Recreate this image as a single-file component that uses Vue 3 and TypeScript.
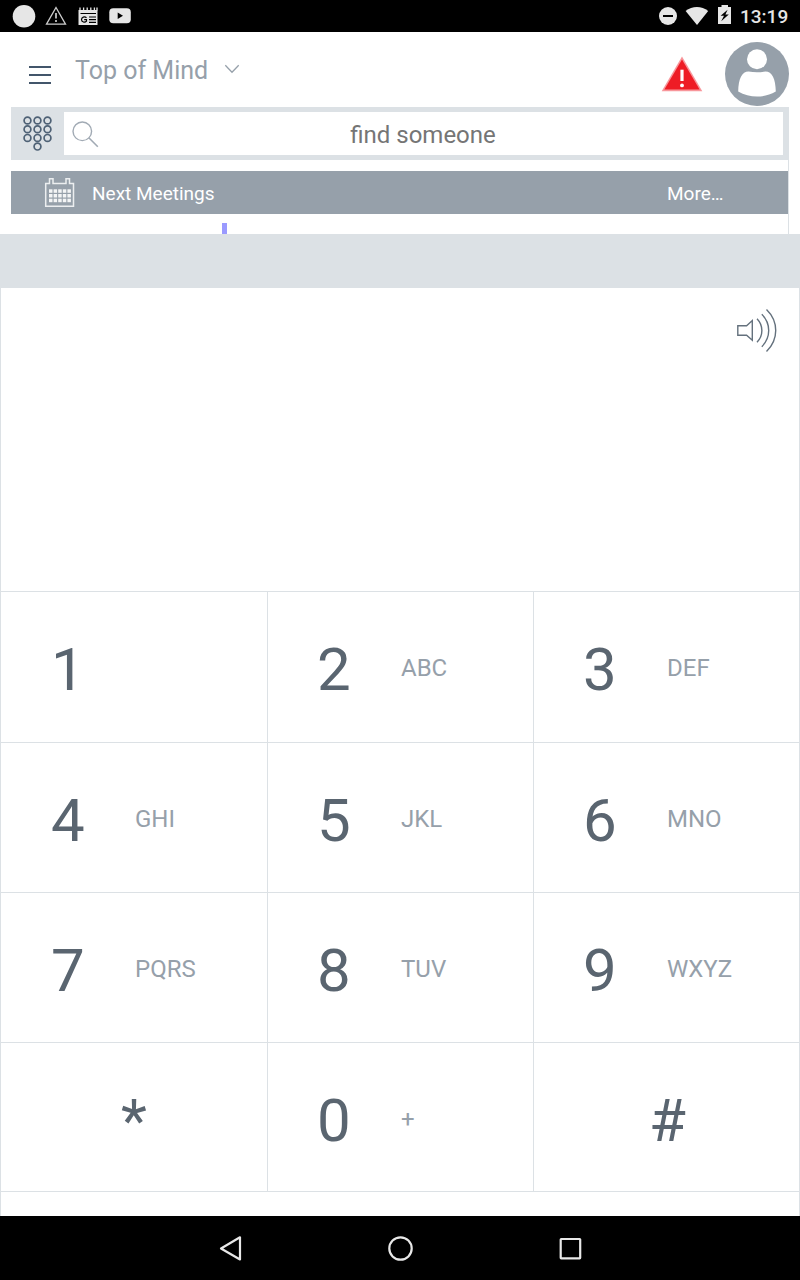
<script setup lang="ts">
interface Key {
  digit: string
  letters?: string
  symbol?: boolean
}

const keys: Key[] = [
  { digit: '1' },
  { digit: '2', letters: 'ABC' },
  { digit: '3', letters: 'DEF' },
  { digit: '4', letters: 'GHI' },
  { digit: '5', letters: 'JKL' },
  { digit: '6', letters: 'MNO' },
  { digit: '7', letters: 'PQRS' },
  { digit: '8', letters: 'TUV' },
  { digit: '9', letters: 'WXYZ' },
  { digit: '*', symbol: true },
  { digit: '0', letters: '+' },
  { digit: '#', symbol: true },
]

// centres of the dial pad icon's rings
const rings: [number, number][] = [
  [27.5, 13.5], [37.5, 13.5], [47.5, 13.5],
  [27.5, 22.2], [37.5, 22.2], [47.5, 22.2],
  [27.5, 30.9], [37.5, 30.9], [47.5, 30.9],
  [37.5, 39.6],
]
const calendarColumns = [49, 53.6, 58.2, 62.8, 67.4]
const calendarRows = [189.3, 194, 198.7]
</script>

<template>
  <div class="screen">
    <div class="status">
      <svg width="140" height="32" viewBox="0 0 140 32">
        <circle cx="24" cy="16.3" r="11.3" fill="#e6e6e6" />
        <path d="M56 7.5L65.5 24.2H46.5Z" fill="none" stroke="#ccc" stroke-width="1.3" />
        <path d="M56 13v5.5M56 20v2" stroke="#ccc" stroke-width="1.7" />
        <path d="M78.5 10h19v15h-19z" fill="#e6e6e6" />
        <path d="M80 7.5v3M83.6 7.5v3M87.2 7.5v3M90.8 7.5v3M94.4 7.5v3M97 7.5v3" stroke="#e6e6e6" stroke-width="1.3" />
        <path d="M80.5 13.5H96M89 17h7M89 19.7h7M89 22.4h7" stroke="#000" stroke-width="1.2" />
        <path d="M86.5 17.7c-2-1.7-5-.6-5 1.9s3.4 3.4 5 1.6v-1.6h-2.3" fill="none" stroke="#000" stroke-width="1.2" />
        <rect x="109.3" y="8.3" width="21.5" height="15" rx="4" fill="#e6e6e6" />
        <path d="M117.7 12.6l5.3 3.2-5.3 3.2z" fill="#000" />
      </svg>
      <svg width="84" height="32" viewBox="655 0 84 32">
        <circle cx="668" cy="16" r="9" fill="#e6e6e6" />
        <path d="M663 16h10" stroke="#000" stroke-width="2" />
        <path d="M685.6 11c6.6-5.3 16-5.3 22.6 0L697 25z" fill="#e6e6e6" />
        <path d="M718 7h3.5V5h6.5v2h3v17h-13z" fill="#e6e6e6" />
        <path d="M727.6 9.8l-7 6h3.4l-2.8 5.4 7.6-6.6h-3.4z" fill="#000" />
      </svg>
      <span class="clock">13:19</span>
    </div>

    <header class="header">
      <svg class="menu" width="24" height="20" viewBox="0 0 24 20">
        <path d="M1 2h22M1 10h22M1 18h22" stroke="#43566b" stroke-width="2" />
      </svg>
      <span class="title">Top of Mind</span>
      <svg class="chevron" width="16" height="10" viewBox="0 0 16 10">
        <path d="M1.3 1.3L8 8.3l6.7-7" fill="none" stroke="#96a0aa" stroke-width="1.3" />
      </svg>
      <svg class="alert" width="42" height="37" viewBox="661 56 42 37">
        <path d="M682 56.5L702.3 91.3H661.7Z" fill="#f8969b" />
        <path d="M682 59.5L699.6 89.5H664.4Z" fill="#ee1c25" />
        <path d="M682 69.7v11.3" stroke="#fff" stroke-width="3.2" />
        <circle cx="682" cy="85.4" r="1.9" fill="#fff" />
      </svg>
      <svg class="avatar" width="64" height="64" viewBox="725 42 64 64">
        <circle cx="757" cy="74" r="32" fill="#96a0aa" />
        <circle cx="757" cy="59.2" r="10" fill="#fff" />
        <path d="M738.2 91.5c.2-13 3.8-20 10.3-20 5.5 1 11.5 1 17 0 6.5 0 10.1 7 10.3 20-11.5 6.7-26.1 6.7-37.6 0z" fill="#fff" />
      </svg>
    </header>

    <div class="search">
      <svg class="dial" width="53" height="53" viewBox="11 0 53 53">
        <circle v-for="([x, y], i) in rings" :key="i" :cx="x" :cy="y" r="3.4" fill="none" stroke="#4f6276" stroke-width="1.7" />
      </svg>
      <div class="field">
        <svg class="lens" width="28" height="28" viewBox="71 119 28 28">
          <circle cx="82.3" cy="130.3" r="9.3" fill="none" stroke="#a1aab4" stroke-width="1.4" />
          <path d="M88.8 136.8l9 9" stroke="#a1aab4" stroke-width="1.6" />
        </svg>
        <span class="hint">find someone</span>
      </div>
    </div>

    <div class="agenda">
      <div class="meetings">
        <svg class="calendar" width="31" height="31" viewBox="44 177 31 31">
          <path d="M45.7 183.5h3.8v-4.7h3.5v4.7h13v-4.7h3.5v4.7h4v22.7H45.7z" fill="none" stroke="#eceef0" stroke-width="1.5" />
          <template v-for="y in calendarRows" :key="y">
            <rect v-for="x in calendarColumns" :key="x" :x="x" :y="y" width="3.5" height="3.5" fill="#f4f5f6" />
          </template>
        </svg>
        <span class="label">Next Meetings</span>
        <span class="more">More…</span>
      </div>
      <div class="tick"></div>
    </div>

    <div class="band"></div>

    <main class="dialer">
      <div class="display">
        <svg width="42" height="46" viewBox="736 307 42 46" fill="none" stroke="#64717d" stroke-width="1.4">
          <path d="M737.8 325.7h8.8l5.7-5.2v19.8l-5.7-5.1h-8.8z" />
          <path d="M757 318.7c6.5 6.7 6.5 16.8 0 23.5M761.8 314.3c9.2 9.3 9.2 23 0 32.4M766.5 309.5c12.3 12 12.3 30 0 42" />
        </svg>
      </div>
      <div class="keypad">
        <div v-for="key in keys" :key="key.digit" class="key" :class="{ symbol: key.symbol }">
          <span class="digit">{{ key.digit }}</span>
          <span v-if="key.letters" class="letters">{{ key.letters }}</span>
        </div>
      </div>
    </main>

    <nav class="nav">
      <svg width="800" height="64" viewBox="0 1216 800 64" fill="none" stroke="#e8e8e8" stroke-width="2.2">
        <path d="M240 1237.3v22.2L221 1248.5z" stroke-linejoin="round" />
        <circle cx="400.5" cy="1248.5" r="11.2" />
        <rect x="560.7" y="1239" width="19.5" height="19.3" rx=".5" />
      </svg>
    </nav>
  </div>
</template>

<style>
body {
  margin: 0;
  background: #fff;
}
</style>

<style scoped>
.screen {
  width: 800px;
  height: 1280px;
  display: flex;
  flex-direction: column;
  background: #fff;
  font-family: Roboto, sans-serif;
  overflow: hidden;
}
svg {
  display: block;
  flex: none;
}
.status {
  height: 32px;
  display: flex;
  background: #000;
  color: #e6e6e6;
}
.status svg + svg {
  margin-left: 515px;
}
.clock {
  margin-left: 1px;
  font-size: 19px;
  font-weight: 500;
  line-height: 33px;
}
.header {
  height: 75px;
  display: flex;
  align-items: flex-start;
}
.menu {
  margin: 33px 0 0 28px;
}
.title {
  width: 140px;
  margin: 24px 0 0 23px;
  font-size: 25px;
  line-height: 30px;
  color: #96a0aa;
  white-space: nowrap;
}
.chevron {
  margin: 32px 0 0 9px;
}
.alert {
  margin: 24px 0 0 421px;
}
.avatar {
  margin: 10px 0 0 22px;
}
.search {
  width: 778px;
  height: 53px;
  margin-left: 11px;
  display: flex;
  background: #dce1e5;
}
.field {
  width: 719px;
  height: 43px;
  margin-top: 5px;
  display: flex;
  background: #fff;
}
.lens {
  margin: 8px 0 0 7px;
}
.hint {
  width: 648px;
  line-height: 47px;
  font-size: 24px;
  text-align: center;
  color: #757575;
}
.agenda {
  box-sizing: border-box;
  width: 789px;
  height: 74px;
  padding: 11px 0 0 11px;
  border-right: 1px solid #dce1e5;
}
.meetings {
  height: 43px;
  display: flex;
  background: #96a0aa;
  color: #fff;
  font-size: 19px;
  line-height: 46px;
}
.calendar {
  margin: 6px 0 0 33px;
}
.label {
  width: 575px;
  margin-left: 17px;
}
.tick {
  width: 5px;
  height: 11px;
  margin: 9px 0 0 211px;
  background: #9a9aff;
}
.band {
  height: 54px;
  background: #dce1e5;
}
.dialer {
  box-sizing: border-box;
  height: 928px;
  border: solid #dce1e5;
  border-width: 0 1px;
}
.display {
  box-sizing: border-box;
  height: 304px;
  display: flex;
  justify-content: flex-end;
  padding: 19px 21px 0 0;
  border-bottom: 1px solid #dce1e5;
}
.keypad {
  display: grid;
  grid-template-columns: 267px 266px 265px;
  grid-template-rows: 151px 150px 150px 149px;
}
.key {
  display: flex;
  border: solid #dce1e5;
  border-width: 0 1px 1px 0;
}
.key:nth-child(3n) {
  border-right: 0;
}
.key:nth-child(3n + 1):not(.symbol) {
  padding-left: 1px;
}
.digit {
  width: 84px;
  padding: 48px 0 0 49px;
  font-size: 60px;
  line-height: 60px;
  color: #5a6570;
}
.letters {
  padding-top: 62px;
  font-size: 24px;
  line-height: 28px;
  color: #96a0aa;
}
.symbol .digit {
  width: 100%;
  padding-left: 0;
  text-align: center;
}
.symbol:last-child {
  padding-left: 2px;
}
.nav {
  height: 64px;
  background: #000;
}
</style>
